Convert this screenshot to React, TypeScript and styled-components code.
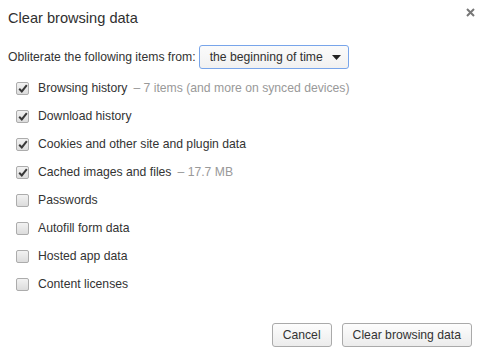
import { createGlobalStyle } from 'styled-components'
import styled from 'styled-components'

const GlobalStyle = createGlobalStyle`
  html, body {
    margin: 0;
    padding: 0;
    background: #ffffff;
  }
  body {
    font-family: 'Liberation Sans', Arial, sans-serif;
    color: #333333;
    font-size: 12.2px;
  }
`

const DialogSC = styled.div`
  width: 482px;
  height: 361px;
  box-sizing: border-box;
  padding: 0 10px 0 8px;
  display: flex;
  flex-direction: column;
`

const HeaderSC = styled.div`
  display: flex;
  justify-content: space-between;
  align-items: flex-start;
  height: 44px;
`

const TitleSC = styled.h1`
  margin: 9px 0 0;
  font-size: 14.6px;
  font-weight: normal;
  line-height: 18px;
  color: #303030;
`

const CloseSC = styled.button`
  margin: 6px -4px 0 0;
  padding: 0;
  width: 12px;
  height: 12px;
  border: none;
  background: none;
  display: flex;
  align-items: center;
  justify-content: center;
`

const RangeRowSC = styled.div`
  display: flex;
  align-items: center;
  column-gap: 3px;
  height: 24px;
  margin-top: 1px;
`

const DropdownSC = styled.div`
  display: flex;
  align-items: center;
  justify-content: space-between;
  box-sizing: border-box;
  width: 150px;
  height: 24px;
  padding: 0 7px 0 10px;
  border: 1px solid #78a5ea;
  border-radius: 3px;
  background: linear-gradient(#fbfbfb, #f1f1f1);
  color: #303030;
`

const ListSC = styled.ul`
  list-style: none;
  margin: 5px 0 0;
  padding: 0 0 0 8px;
  display: flex;
  flex-direction: column;
`

const ItemSC = styled.li`
  display: flex;
  align-items: center;
  column-gap: 9px;
  height: 28px;
`

const BoxSC = styled.span<{ $checked: boolean }>`
  box-sizing: border-box;
  width: 13px;
  height: 13px;
  border: 1px solid #acacac;
  border-radius: 2px;
  background: linear-gradient(#f2f2f2, #dcdcdc);
  display: flex;
  align-items: center;
  justify-content: center;
`

const DetailSC = styled.span`
  color: #999999;
  margin-left: 6px;
`

const FooterSC = styled.div`
  display: flex;
  justify-content: flex-end;
  column-gap: 10px;
  margin-top: auto;
  margin-bottom: 14px;
`

const ButtonSC = styled.button`
  box-sizing: border-box;
  height: 24px;
  padding: 0 10px;
  border: 1px solid #aaaaaa;
  border-radius: 3px;
  background: linear-gradient(#fdfdfd, #ececec);
  font-family: inherit;
  font-size: 12.2px;
  color: #333333;
`

const items: { label: string; detail?: string; checked: boolean }[] = [
  { label: 'Browsing history', detail: '– 7 items (and more on synced devices)', checked: true },
  { label: 'Download history', checked: true },
  { label: 'Cookies and other site and plugin data', checked: true },
  { label: 'Cached images and files', detail: '– 17.7 MB', checked: true },
  { label: 'Passwords', checked: false },
  { label: 'Autofill form data', checked: false },
  { label: 'Hosted app data', checked: false },
  { label: 'Content licenses', checked: false },
]

function Check() {
  return (
    <svg width="10" height="9" viewBox="0 0 10 9">
      <path d="M1.2 4.8 L3.8 7.4 L8.8 1.2" fill="none" stroke="#383838" strokeWidth="2" />
    </svg>
  )
}

export default function App() {
  return (
    <DialogSC>
      <GlobalStyle />
      <HeaderSC>
        <TitleSC>Clear browsing data</TitleSC>
        <CloseSC aria-label="Close">
          <svg width="9" height="9" viewBox="0 0 9 9">
            <path d="M1 1 L8 8 M8 1 L1 8" stroke="#777777" strokeWidth="2" />
          </svg>
        </CloseSC>
      </HeaderSC>
      <RangeRowSC>
        <span>Obliterate the following items from:</span>
        <DropdownSC>
          <span>the beginning of time</span>
          <svg width="9" height="5" viewBox="0 0 9 5">
            <path d="M0 0 H9 L4.5 5 Z" fill="#222222" />
          </svg>
        </DropdownSC>
      </RangeRowSC>
      <ListSC>
        {items.map((item) => (
          <ItemSC key={item.label}>
            <BoxSC $checked={item.checked}>{item.checked && <Check />}</BoxSC>
            <span>
              {item.label}
              {item.detail && <DetailSC>{item.detail}</DetailSC>}
            </span>
          </ItemSC>
        ))}
      </ListSC>
      <FooterSC>
        <ButtonSC>Cancel</ButtonSC>
        <ButtonSC>Clear browsing data</ButtonSC>
      </FooterSC>
    </DialogSC>
  )
}
